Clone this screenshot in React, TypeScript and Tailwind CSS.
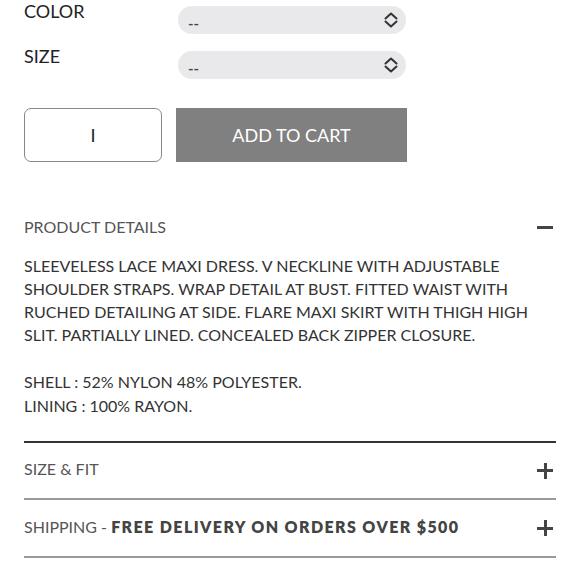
import React from "react";

const font = { fontFamily: "Lato, 'Open Sans', sans-serif" };

function Chevrons() {
  return (
    <svg width="14" height="16" viewBox="0 0 14 16" fill="none" stroke="#333" strokeWidth="2" strokeLinecap="round" strokeLinejoin="round">
      <path d="M1.5 6.5 L7 1.5 L12.5 6.5" />
      <path d="M1.5 9.5 L7 14.5 L12.5 9.5" />
    </svg>
  );
}

function Plus() {
  return (
    <div className="relative w-[16px] h-[16px]">
      <div className="absolute left-0 top-[6.5px] w-[16px] h-[3px] bg-[#444]" />
      <div className="absolute top-0 left-[6.5px] w-[3px] h-[16px] bg-[#444]" />
    </div>
  );
}

export default function App() {
  return (
    <div className="w-[580px] h-[580px] overflow-hidden bg-white text-[#333]" style={font}>
      <div className="px-[24px] pt-[6px]">
        <div className="flex items-start">
          <div className="w-[154px] text-[18px] leading-none text-[#222] -mt-[4px]">COLOR</div>
          <div className="w-[228px] h-[28px] rounded-full bg-[#e9e9eb] flex items-center justify-between pl-[10px] pr-[8px]">
            <span className="text-[15px] font-semibold text-[#444] pt-[6px]">--</span>
            <Chevrons />
          </div>
        </div>
        <div className="flex items-start mt-[17px]">
          <div className="w-[154px] text-[18px] leading-none text-[#222] -mt-[4px]">SIZE</div>
          <div className="w-[228px] h-[28px] rounded-full bg-[#e9e9eb] flex items-center justify-between pl-[10px] pr-[8px]">
            <span className="text-[15px] font-semibold text-[#444] pt-[6px]">--</span>
            <Chevrons />
          </div>
        </div>
        <div className="flex mt-[29px] gap-[14px]">
          <div className="w-[138px] h-[54px] border border-[#888] rounded-[7px] flex items-center justify-center text-[18px] text-[#222]">I</div>
          <div className="w-[231px] h-[54px] bg-[#808080] flex items-center justify-center text-[18px] text-white">ADD TO CART</div>
        </div>

        <div className="mt-[53px] flex items-center justify-between pr-[3px]">
          <span className="text-[16px] text-[#555]">PRODUCT DETAILS</span>
          <div className="w-[16px] h-[3px] bg-[#444]" />
        </div>
        <div className="mt-[15px] text-[16px] leading-[23px] text-[#333] w-[520px]">
          <p>SLEEVELESS LACE MAXI DRESS. V NECKLINE WITH ADJUSTABLE SHOULDER STRAPS. WRAP DETAIL AT BUST. FITTED WAIST WITH RUCHED DETAILING AT SIDE. FLARE MAXI SKIRT WITH THIGH HIGH SLIT. PARTIALLY LINED. CONCEALED BACK ZIPPER CLOSURE.</p>
          <p className="mt-[24px] leading-[24px]">SHELL : 52% NYLON 48% POLYESTER.</p>
          <p className="leading-[24px]">LINING : 100% RAYON.</p>
        </div>
        <div className="mt-[23px] border-t-[2px] border-[#333]" />
        <div className="h-[57px] flex items-center justify-between pr-[3px] border-b-[2px] border-[#999]">
          <span className="text-[16px] text-[#555] -mt-[3px]">SIZE &amp; FIT</span>
          <Plus />
        </div>
        <div className="h-[58px] flex items-center justify-between pr-[3px] border-b-[2px] border-[#999]">
          <span className="text-[16px] text-[#555] -mt-[2px]">SHIPPING - <b className="font-extrabold tracking-[1.4px] text-[#444]">FREE DELIVERY ON ORDERS OVER $500</b></span>
          <Plus />
        </div>
      </div>
    </div>
  );
}
